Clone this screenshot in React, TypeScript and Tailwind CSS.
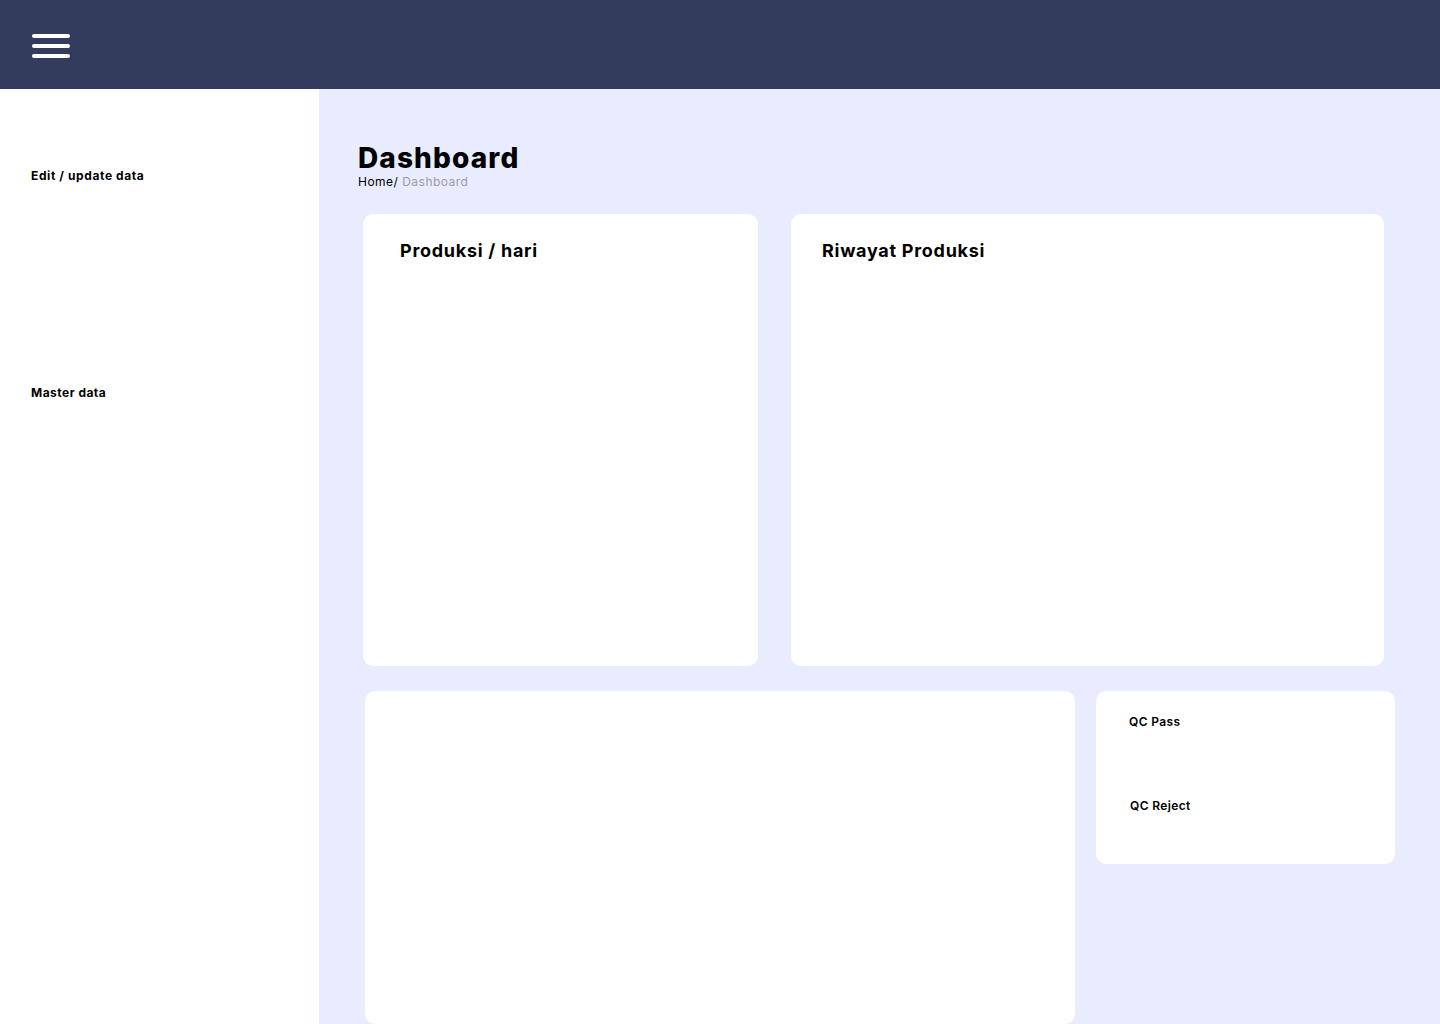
const font = { fontFamily: "Inter, 'Noto Sans', sans-serif" };

const Hamburger = () => (
  <div className="mt-[3px] flex flex-col gap-[6px] w-[38px]">
    <div className="h-[4px] w-full rounded-full bg-white" />
    <div className="h-[4px] w-full rounded-full bg-white" />
    <div className="h-[4px] w-full rounded-full bg-white" />
  </div>
);

export default function App() {
  return (
    <div className="h-[1024px] w-[1440px] overflow-hidden flex flex-col" style={font}>
      <header className="h-[89px] shrink-0 bg-[#343c5e] flex items-center pl-[32px]">
        <Hamburger />
      </header>

      <div className="flex flex-1 min-h-0">
        <aside className="w-[319px] shrink-0 bg-white pl-[31px] pt-[79px]">
          <p className="text-[12px] font-bold tracking-[0.05em] text-black leading-[16px]">Edit / update data</p>
          <p className="mt-[201px] text-[12px] font-bold tracking-[0.04em] text-black leading-[16px]">Master data</p>
        </aside>

        <main className="flex-1 bg-[#e8ecfe] pl-[39px] pt-[53px] flex flex-col">
          <h1 className="text-[28px] font-extrabold tracking-[0.04em] leading-[32px] text-black">Dashboard</h1>
          <p className="text-[12px] tracking-[0.04em] leading-[16px] text-black">
            Home/ <span className="text-[#9b9ba8]">Dashboard</span>
          </p>

          <div className="mt-[24px] ml-[5px] flex gap-[33px]">
            <section className="h-[452px] w-[395px] rounded-[10px] bg-white pl-[37px] pt-[26px]">
              <h2 className="text-[18px] font-bold tracking-[0.04em] leading-[22px] text-black">Produksi / hari</h2>
            </section>
            <section className="h-[452px] w-[593px] rounded-[10px] bg-white pl-[31px] pt-[26px]">
              <h2 className="text-[18px] font-bold tracking-[0.04em] leading-[22px] text-black">Riwayat Produksi</h2>
            </section>
          </div>

          <div className="mt-[25px] ml-[7px] flex gap-[21px] items-start">
            <section className="h-[333px] w-[710px] rounded-[10px] bg-white" />
            <section className="h-[173px] w-[299px] rounded-[10px] bg-white pl-[33px] pt-[23px]">
              <p className="text-[12px] font-semibold tracking-[0.03em] leading-[16px] text-black">QC Pass</p>
              <p className="mt-[68px] ml-[1px] text-[12px] font-semibold tracking-[0.03em] leading-[16px] text-black">QC Reject</p>
            </section>
          </div>
        </main>
      </div>
    </div>
  );
}
